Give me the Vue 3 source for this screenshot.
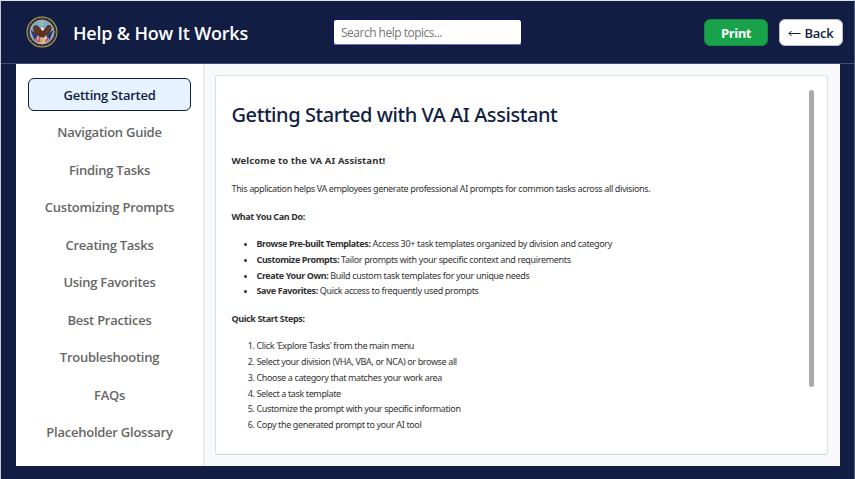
<script setup>
import { ref } from 'vue'

const topics = [
  'Getting Started', 'Navigation Guide', 'Finding Tasks', 'Customizing Prompts', 'Creating Tasks',
  'Using Favorites', 'Best Practices', 'Troubleshooting', 'FAQs', 'Placeholder Glossary',
]
const active = ref('Getting Started')
const query = ref('')
const features = [
  ['Browse Pre-built Templates:', 'Access 30+ task templates organized by division and category'],
  ['Customize Prompts:', 'Tailor prompts with your specific context and requirements'],
  ['Create Your Own:', 'Build custom task templates for your unique needs'],
  ['Save Favorites:', 'Quick access to frequently used prompts'],
]
const steps = [
  "Click 'Explore Tasks' from the main menu",
  'Select your division (VHA, VBA, or NCA) or browse all',
  'Choose a category that matches your work area',
  'Select a task template',
  'Customize the prompt with your specific information',
  'Copy the generated prompt to your AI tool',
]
</script>

<template>
  <div class="window">
    <header class="topbar">
      <svg class="seal" viewBox="0 0 32 32" aria-hidden="true">
        <circle cx="16" cy="16" r="15.500" fill="#d0a743" />
        <circle cx="16" cy="16" r="14.500" fill="#1b2348" />
        <circle cx="16" cy="16" r="13.400" fill="none" stroke="#8e8460" stroke-width=".8" stroke-dasharray="1 1.300" />
        <circle cx="16" cy="16" r="12" fill="#77add0" stroke="#cbb368" stroke-width=".8" />
        <path d="M4.500 14l6 4 3 8-5-2zM27.500 14l-6 4-3 8 5-2z" fill="#2c3768" />
        <path d="M8.500 23l4-3 3.500 3 3.500-3 4 3-3 3.500-4.500 1.600-4.500-1.600z" fill="#d8bfc0" />
        <path d="M9.500 22l3 4M22.500 21.500l-3 4.500M13 21l1 5" stroke="#c04452" stroke-width="1.500" />
        <path d="M13.500 7h5M14.500 5.500h3M14.500 8.500h3" stroke="#e1cf63" stroke-width="1" stroke-dasharray="1 .7" />
        <path d="M7 11.500c1-2.500 3.500-3 5-1.500l3 3 1.500 1.500 1.500-.5 2.500-3.500c1.500-2 4-2 5 .5.500 3-1.500 6-4 7.500l-3 2-2 2.500-2.500-2-3-2c-2.500-1.500-4-4-4-7.500z" fill="#5c3120" />
        <path d="M9 12l4 5M24 11l-4 6" stroke="#7c482e" stroke-width="1" />
        <path d="M15 11l2 .5 1 2-1.500 1.500-1.500-1.500z" fill="#f0e8dc" />
        <path d="M15.500 21h1.500l1 4.500-2 2-1-2z" fill="#d8b84e" />
      </svg>
      <h1>Help &amp; How It Works</h1>
      <input v-model="query" class="search" type="text" placeholder="Search help topics..." />
      <div class="actions">
        <button class="btn print">Print</button>
        <button class="btn back">
          <svg class="arrow" viewBox="0 0 13 8" aria-hidden="true"><path d="M12.500 4.500H1M3.500 2L1 4.500 3.500 7" /></svg>
          <span>Back</span>
        </button>
      </div>
    </header>
    <div class="body">
      <nav class="sidebar">
        <button
          v-for="t in topics" :key="t" class="topic" :class="{ active: t === active }"
          @click="active = t"
        >{{ t }}</button>
      </nav>
      <main class="main">
        <article class="card">
          <div class="content">
            <h2>Getting Started with VA AI Assistant</h2>
            <h3>Welcome to the VA AI Assistant!</h3>
            <p class="intro">This application helps VA employees generate professional AI prompts for common tasks across all divisions.</p>
            <h4>What You Can Do:</h4>
            <ul>
              <li v-for="f in features" :key="f[0]"><b>{{ f[0] }}</b> {{ f[1] }}</li>
            </ul>
            <h4>Quick Start Steps:</h4>
            <ol>
              <li v-for="s in steps" :key="s">{{ s }}</li>
            </ol>
          </div>
          <div class="track"><div class="thumb"></div></div>
        </article>
      </main>
    </div>
  </div>
</template>

<style>
body { margin: 0; overflow: hidden; }
</style>

<style scoped>
* { box-sizing: border-box; }
.window {
  width: 855px; height: 479px; display: flex; flex-direction: column;
  background: #111d42; border: 1px solid #dfe3e4; border-left-color: #c5cacf;
  border-right-color: #53607b; border-bottom: 0;
  font-family: "Open Sans", "Noto Sans", sans-serif;
}
.topbar {
  height: 63px; flex: none; display: flex; align-items: center; padding: 0 11px 0 25px;
  border-bottom: 1px solid #454e6b;
}
.seal { width: 32px; height: 32px; flex: none; }
h1 {
  margin: 1px 0 0 15px; width: 260px; flex: none; color: #fff; white-space: nowrap;
  font: 600 18px/26px "Open Sans", sans-serif; letter-spacing: -.2px;
}
.search {
  width: 189px; height: 26px; padding: 1px 7px 0; border: 1px solid #10106f;
  border-bottom-color: #6a6fae; border-radius: 3px;
  background: #fff; font: 400 12px/16px "Open Sans", sans-serif; letter-spacing: -.5px;
  outline: 0; color: #333;
}
.search::placeholder { color: #757575; opacity: 1; }
.actions { margin-left: auto; display: flex; gap: 11px; padding-top: 1px; }
.btn {
  width: 64px; height: 27px; padding: 0; border-radius: 6px; display: flex;
  align-items: center; justify-content: center; gap: 3px;
  font: 600 13px/18px "Open Sans", sans-serif;
}
.print { background: #18a34a; border: 1px solid #128645; color: #fff; font-weight: 700; letter-spacing: -.4px; }
.back { background: #fff; border: 1px solid #b9bdca; color: #111d42; letter-spacing: -.2px; }
.arrow { width: 13px; height: 8px; fill: none; stroke: #111d42; stroke-width: 1; }
.body { display: flex; height: 402px; margin: 0 14px 0 15px; background: #f7f9fb; }
.sidebar {
  width: 189px; flex: none; padding: 14px 12px 0; background: #fff;
  border-right: 2px solid #eaecef; display: flex; flex-direction: column; gap: 4.500px;
}
.topic {
  height: 33px; flex: none; padding: 0; border: 1px solid transparent; border-radius: 6px;
  background: transparent; color: #666; font: 600 13px/18px "Open Sans", sans-serif;
  letter-spacing: -.25px;
}
.topic.active { background: #e6f2ff; border-color: #111d42; color: #111d42; }
.main { flex: 1; padding: 11px 12px 11px 10px; }
.card {
  height: 380px; display: flex; justify-content: space-between; padding: 14px 12.500px 0 15.500px;
  background: #fff; border: 1px solid #dcdee1; border-bottom-color: #cfd1d4; border-radius: 3px;
}
.content {
  color: #333; font: 400 9px/15.750px "Noto Sans", sans-serif; white-space: nowrap;
  letter-spacing: -.37px;
}
h2 {
  height: 36px; margin: 12px 0 0; color: #111d42;
  font: 500 20px/26px "Noto Sans", sans-serif; letter-spacing: -.43px;
}
h3, h4, p { margin: 0; }
h3 { font-size: 9.500px; font-weight: 700; line-height: 16px; margin-top: 15px; letter-spacing: .1px; }
.intro { margin-top: 12px; }
h4 { font-size: 9px; font-weight: 700; margin-top: 12px; }
b { font-weight: 700; letter-spacing: -.4px; }
ul, ol { margin: 11.500px 0 0; padding-left: 25px; }
ul { letter-spacing: -.34px; }
.track { width: 6px; }
.thumb { width: 5px; height: 297px; border-radius: 3px; background: #a9a9a9; }
</style>
